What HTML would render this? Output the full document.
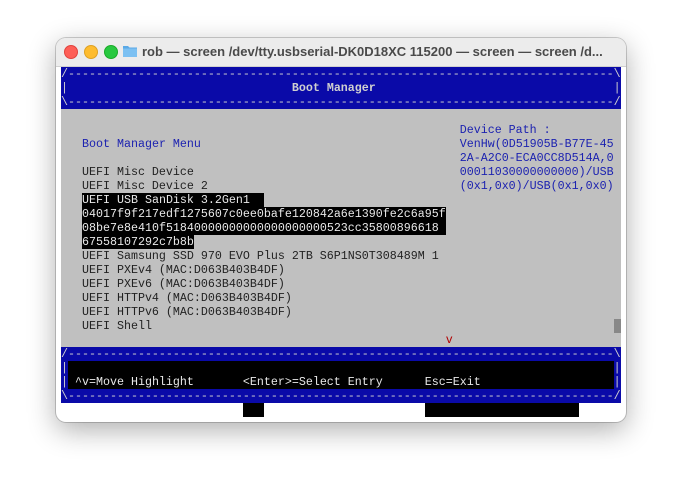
<!DOCTYPE html>
<html><head><style>
body{margin:0;width:682px;height:497px;background:#fff;position:relative;overflow:hidden;font-family:"Liberation Sans",sans-serif}
.win{position:absolute;left:56px;top:38px;width:570px;height:384px;border-radius:10px;background:#fff;box-shadow:0 8px 28px rgba(0,0,0,.32),0 0 0 1px rgba(0,0,0,.18);overflow:hidden}
.tb{position:absolute;left:0;top:0;width:570px;height:28px;background:#ececec;border-bottom:1px solid #d0d0d0}
.dot{position:absolute;top:7px;width:12px;height:12px;border-radius:50%}
.title{position:absolute;left:86px;top:6px;font-size:13px;font-weight:bold;color:#4a4a4a;white-space:nowrap}
.term{position:absolute;left:5px;top:29px;width:560px;height:350px}
pre{margin:0;position:absolute;left:0;top:0;font-family:"Liberation Mono",monospace;font-size:11.67px;line-height:14px;color:#222}
.b{background:#0a0aa8;color:#d0d0d0;display:block}
.g{background:#c0c0c0;display:block}
.k{background:#000;color:#e8e8e8}
.u{color:#1c22b0}
.r{color:#b00000}
</style></head><body>
<div class="win">
<div class="tb">
<div class="dot" style="left:8px;background:#fe5f57;border:0.5px solid #e0443e"></div>
<div class="dot" style="left:28px;background:#febc2e;border:0.5px solid #dea123"></div>
<div class="dot" style="left:48px;background:#28c840;border:0.5px solid #1aab29"></div>
<svg style="position:absolute;left:66px;top:6px" width="16" height="14" viewBox="0 0 16 14"><path d="M1 2h5l1.5 1.5H15v9.5H1z" fill="#5aa9e6"/><rect x="1" y="4.5" width="14" height="8.5" fill="#7cc0f2"/></svg>
<div class="title">rob — screen /dev/tty.usbserial-DK0D18XC 115200 — screen — screen /d...</div>
</div>
<div class="term">
<pre><span class="b">/------------------------------------------------------------------------------\
|                                <b>Boot Manager</b>                                  |
\------------------------------------------------------------------------------/</span><span class="g">                                                                                
                                                         <span class="u">Device Path :</span>          
   <span class="u">Boot Manager Menu</span>                                     <span class="u">VenHw(0D51905B-B77E-45</span> 
                                                         <span class="u">2A-A2C0-ECA0CC8D514A,0</span> 
   UEFI Misc Device                                      <span class="u">00011030000000000)/USB</span> 
   UEFI Misc Device 2                                    <span class="u">(0x1,0x0)/USB(0x1,0x0)</span> 
   <span class="k">UEFI USB SanDisk 3.2Gen1  </span>                                                   
   <span class="k">04017f9f217edf1275607c0ee0bafe120842a6e1390fe2c6a95f</span>                         
   <span class="k">08be7e8e410f51840000000000000000000523cc35800896618 </span>                         
   <span class="k">67558107292c7b8b</span>                                                             
   UEFI Samsung SSD 970 EVO Plus 2TB S6P1NS0T308489M 1                          
   UEFI PXEv4 (MAC:D063B403B4DF)                                                
   UEFI PXEv6 (MAC:D063B403B4DF)                                                
   UEFI HTTPv4 (MAC:D063B403B4DF)                                               
   UEFI HTTPv6 (MAC:D063B403B4DF)                                               
   UEFI Shell                                                                  <span style="background:#888"> </span>
                                                       <span class="r">v</span>                        </span><span class="b">/------------------------------------------------------------------------------\
|<span class="k">                                                                              </span>|
|<span class="k"> ^v=Move Highlight       &lt;Enter&gt;=Select Entry      Esc=Exit                   </span>|
\------------------------------------------------------------------------------/</span>                          <span class="k">   </span>                       <span class="k">                      </span></pre>
</div>
</div>
</body></html>
